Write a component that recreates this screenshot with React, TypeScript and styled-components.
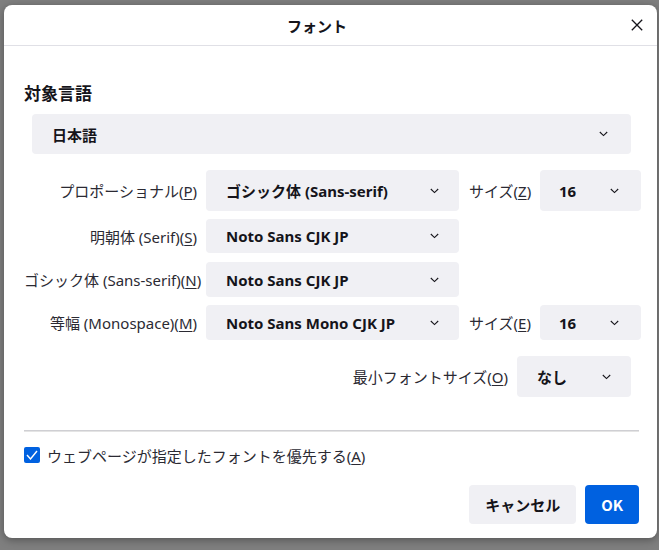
import React from "react";
import styled, { createGlobalStyle } from "styled-components";

const Global = createGlobalStyle`
  html, body { margin: 0; padding: 0; }
  body {
    background: #7f7f7f;
    width: 659px;
    height: 550px;
    overflow: hidden;
    font-family: "Noto Sans", "Noto Sans CJK JP", sans-serif;
    color: #15141a;
  }
`;

const Dialog = styled.div`
  margin: 5px 0 0 4px;
  width: 653px;
  height: 533px;
  background: #fff;
  border-radius: 8px;
  box-shadow: 0 2px 8px rgba(0, 0, 0, 0.35);
  display: flex;
  flex-direction: column;
  overflow: hidden;
`;

const Header = styled.div`
  height: 40px;
  border-bottom: 1px solid #e0e0e6;
  display: flex;
  align-items: center;
  padding-right: 14px;
  flex-shrink: 0;
`;

const Title = styled.div`
  flex: 1;
  text-align: center;
  font-size: 15px;
  font-weight: 700;
  font-family: "Noto Sans CJK JP", sans-serif;
`;

const CloseButton = styled.div`
  width: 12px;
  height: 12px;
  margin-left: 1px;
  display: flex;
`;

const Content = styled.div`
  padding: 37px 18px 0 20px;
  display: flex;
  flex-direction: column;
`;

const Heading = styled.div`
  font-size: 17px;
  font-weight: 700;
  line-height: 20px;
  height: 20px;
  font-family: "Noto Sans CJK JP", sans-serif;
`;

const SelectBox = styled.div<{ $h: number; $w?: number }>`
  height: ${(p) => p.$h}px;
  ${(p) => (p.$w ? `width: ${p.$w}px;` : "")}
  background: #f0f0f4;
  border-radius: 4px;
  display: flex;
  align-items: center;
  box-sizing: border-box;
  padding: 0 20px;
  font-size: 15px;
  font-weight: 700;
`;

const SelectText = styled.span`
  flex: 1;
  white-space: nowrap;
`;

const LangSelect = styled(SelectBox)`
  margin: 11px 8px 0 8px;
  padding: 0 23px 0 20px;
`;

const Grid = styled.div`
  margin-top: 16px;
  display: grid;
  grid-template-columns: 173px 253px 63px 101px;
  column-gap: 9px;
  align-items: center;
  width: 618px;
`;

const Label = styled.div<{ $mt?: number }>`
  font-size: 15px;
  text-align: right;
  white-space: nowrap;
  color: #2b2a33;
  margin-top: ${(p) => p.$mt ?? 0}px;
`;

const SizeLabel = styled(Label)`
  text-align: left;
  margin-left: 1px;
`;

const Cell = styled.div<{ $mt?: number }>`
  margin-top: ${(p) => p.$mt ?? 0}px;
`;

const Key = styled.u`
  text-decoration: underline;
  text-underline-offset: 2px;
`;

const MinRow = styled.div`
  margin: 16px 8px 0 0;
  display: flex;
  justify-content: flex-end;
  align-items: center;
  gap: 9px;
`;

const Separator = styled.div`
  margin-top: 33px;
  height: 1px;
  background: #cfcfd3;
  border-bottom: 1px solid #e4e4e4;
`;

const CheckRow = styled.div`
  margin-top: 13px;
  height: 20px;
  display: flex;
  align-items: center;
  gap: 7px;
  font-size: 15px;
  color: #2b2a33;
`;

const CheckBox = styled.div`
  width: 16px;
  height: 16px;
  border-radius: 2px;
  background: #0061e0;
  display: flex;
  align-items: center;
  justify-content: center;
`;

const Buttons = styled.div`
  margin-top: 20px;
  display: flex;
  justify-content: flex-end;
  gap: 9px;
`;

const Button = styled.div<{ $primary?: boolean }>`
  height: 39px;
  padding: 0 16px;
  border-radius: 4px;
  display: flex;
  align-items: center;
  font-size: 15px;
  font-weight: 700;
  background: ${(p) => (p.$primary ? "#0061e0" : "#f0f0f4")};
  color: ${(p) => (p.$primary ? "#fff" : "#15141a")};
  font-family: "Noto Sans CJK JP", sans-serif;
`;

const Chevron = () => (
  <svg width="9" height="6" viewBox="0 0 9 6">
    <polyline points="0.8,1 4.5,4.6 8.2,1" fill="none" stroke="#15141a" strokeWidth="1.1" />
  </svg>
);

const Select = ({ text, h, w }: { text: string; h: number; w?: number }) => (
  <SelectBox $h={h} $w={w}>
    <SelectText>{text}</SelectText>
    <Chevron />
  </SelectBox>
);

const SizeSelect = styled(SelectBox)`
  padding: 0 22px 0 19px;
`;

export default function App() {
  return (
    <>
      <Global />
      <Dialog>
        <Header>
          <Title>フォント</Title>
          <CloseButton>
            <svg width="12" height="12" viewBox="0 0 12 12">
              <path d="M0.8 0.8 L11.2 11.2 M11.2 0.8 L0.8 11.2" stroke="#15141a" strokeWidth="1.3" />
            </svg>
          </CloseButton>
        </Header>
        <Content>
          <Heading>対象言語</Heading>
          <LangSelect $h={40}>
            <SelectText>日本語</SelectText>
            <Chevron />
          </LangSelect>
          <Grid>
            <Label>
              プロポーショナル(<Key>P</Key>)
            </Label>
            <Select text="ゴシック体 (Sans-serif)" h={41} />
            <SizeLabel>
              サイズ(<Key>Z</Key>)
            </SizeLabel>
            <SizeSelect $h={41}>
              <SelectText>16</SelectText>
              <Chevron />
            </SizeSelect>

            <Label $mt={8}>
              明朝体 (Serif)(<Key>S</Key>)
            </Label>
            <Cell $mt={8}>
              <Select text="Noto Sans CJK JP" h={34} />
            </Cell>
            <div />
            <div />

            <Label $mt={9}>
              ゴシック体 (Sans-serif)(<Key>N</Key>)
            </Label>
            <Cell $mt={9}>
              <Select text="Noto Sans CJK JP" h={35} />
            </Cell>
            <div />
            <div />

            <Label $mt={8}>
              等幅 (Monospace)(<Key>M</Key>)
            </Label>
            <Cell $mt={8}>
              <Select text="Noto Sans Mono CJK JP" h={35} />
            </Cell>
            <SizeLabel $mt={8}>
              サイズ(<Key>E</Key>)
            </SizeLabel>
            <Cell $mt={8}>
              <SizeSelect $h={35}>
                <SelectText>16</SelectText>
                <Chevron />
              </SizeSelect>
            </Cell>
          </Grid>
          <MinRow>
            <Label>
              最小フォントサイズ(<Key>O</Key>)
            </Label>
            <Select text="なし" h={41} w={114} />
          </MinRow>
          <Separator />
          <CheckRow>
            <CheckBox>
              <svg width="12" height="10" viewBox="0 0 12 10">
                <polyline points="1,5 4.5,9 11,1" fill="none" stroke="#fff" strokeWidth="1.4" />
              </svg>
            </CheckBox>
            <span>
              ウェブページが指定したフォントを優先する(<Key>A</Key>)
            </span>
          </CheckRow>
          <Buttons>
            <Button>キャンセル</Button>
            <Button $primary>OK</Button>
          </Buttons>
        </Content>
      </Dialog>
    </>
  );
}
